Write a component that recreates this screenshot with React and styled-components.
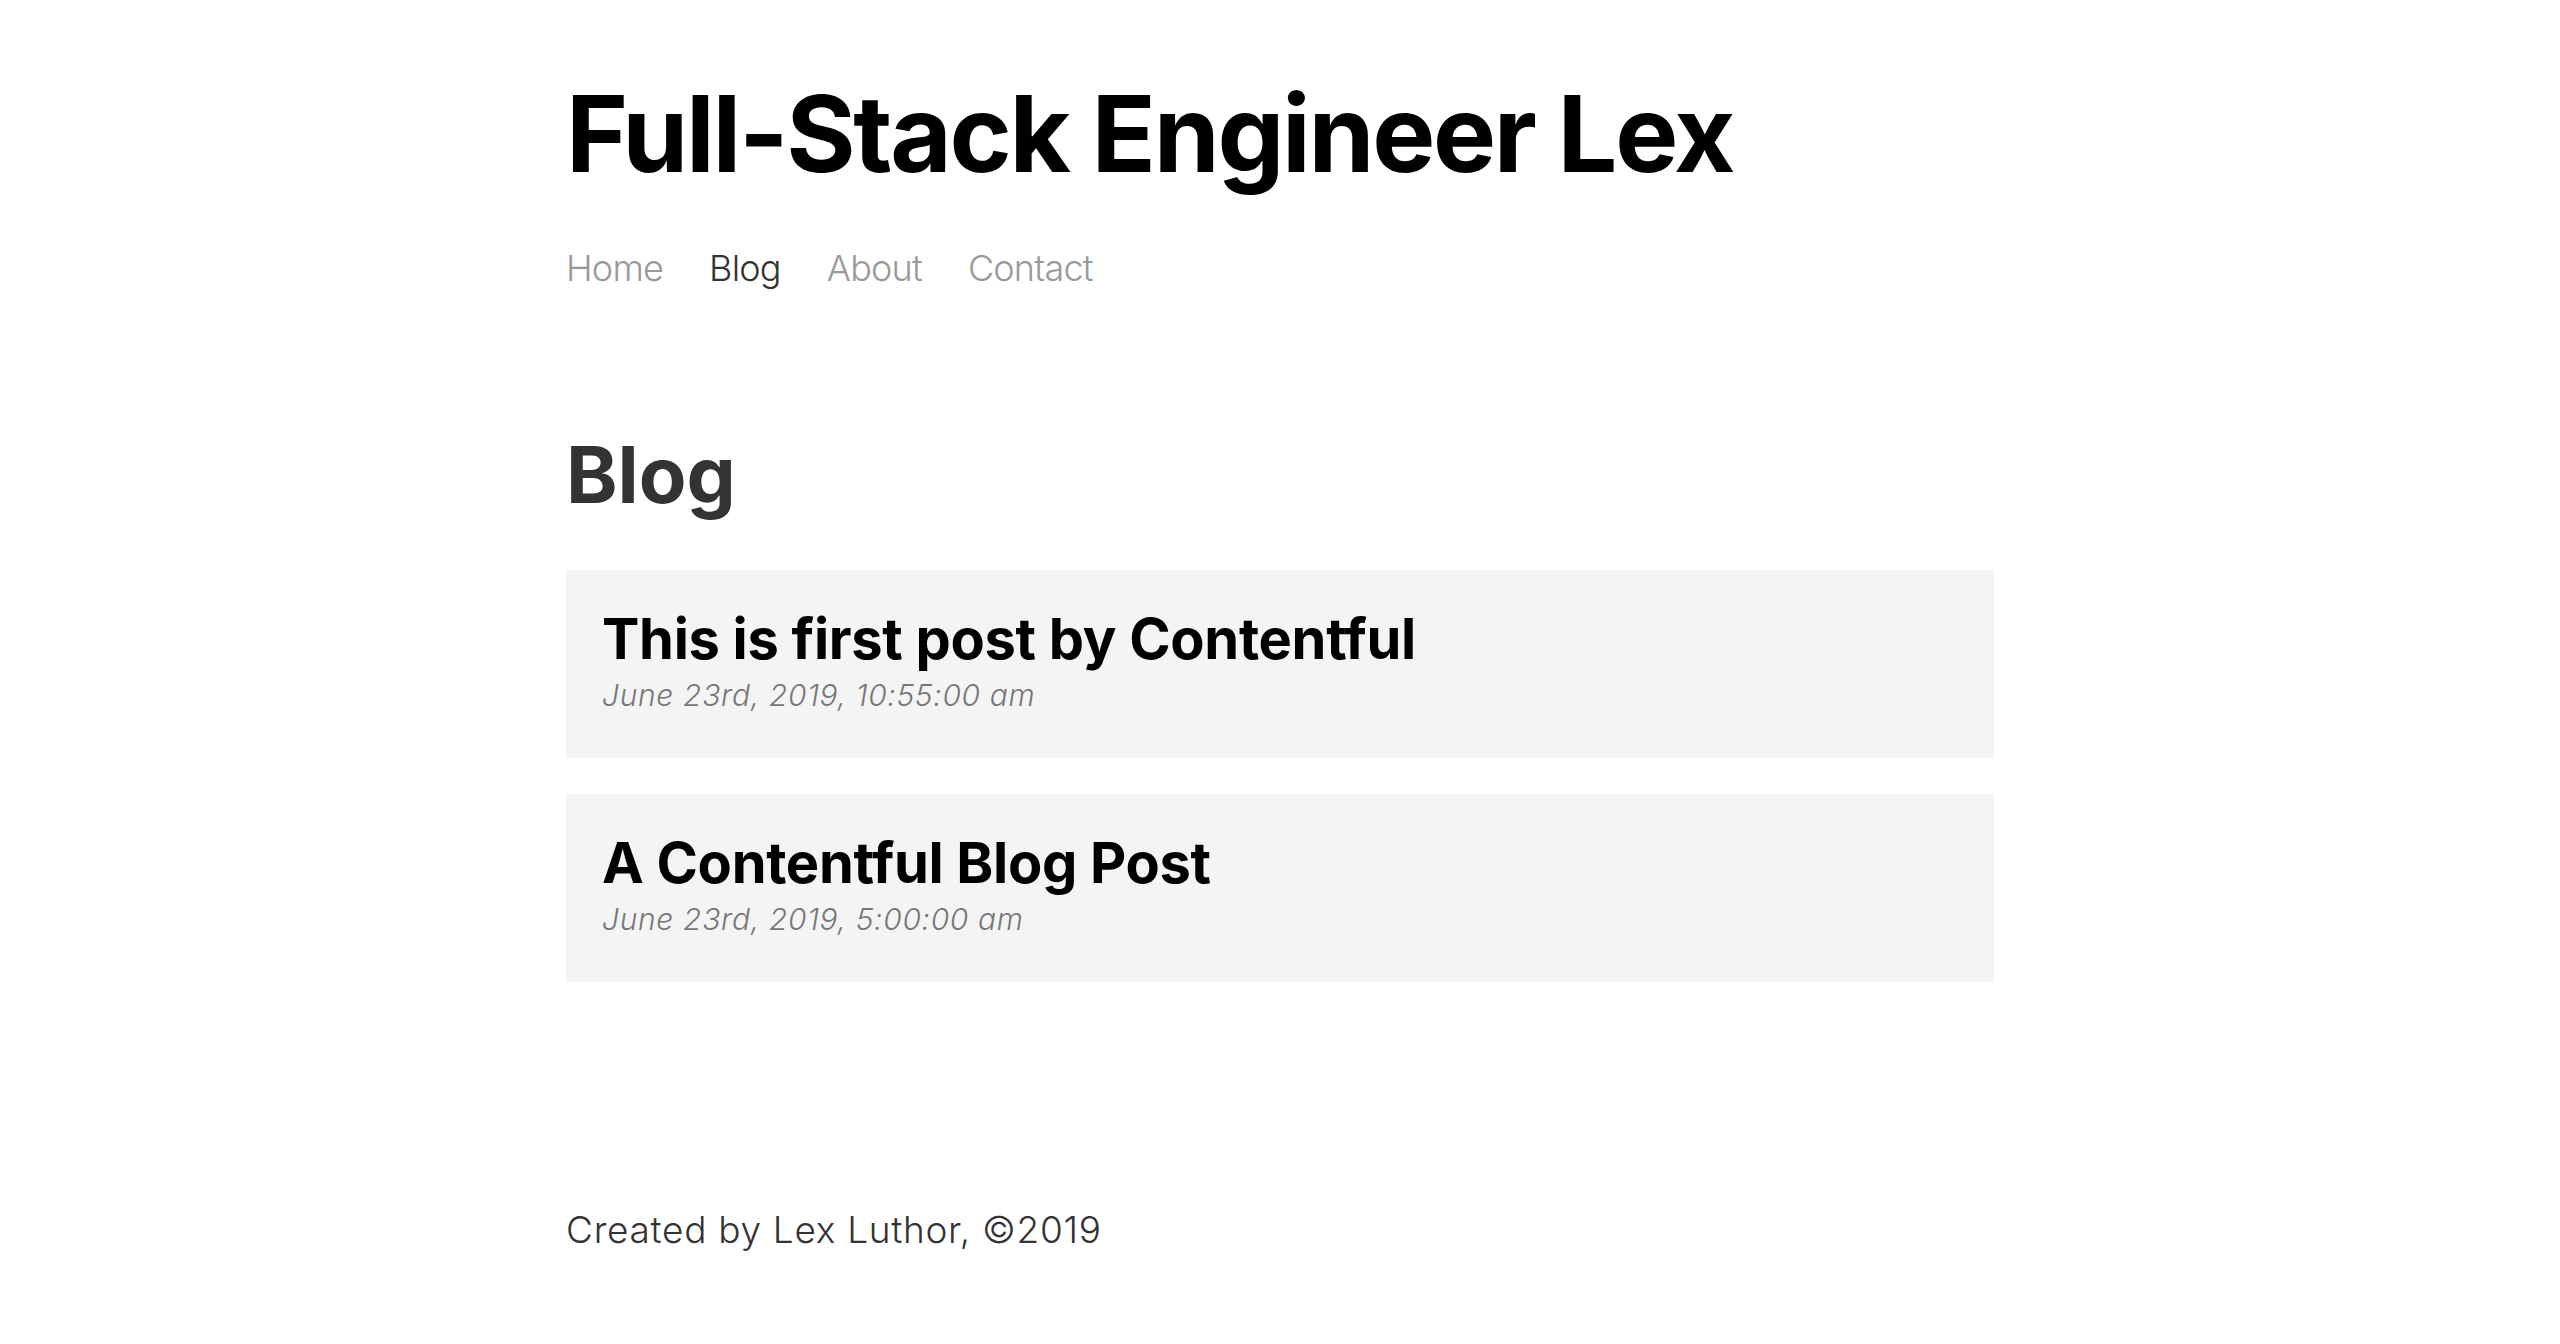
import styled, { createGlobalStyle } from "styled-components";

const GlobalStyle = createGlobalStyle`
  html, body {
    margin: 0;
    padding: 0;
    background: #fff;
  }
  body {
    font-family: Inter, "Noto Sans", "Liberation Sans", sans-serif;
    color: #333;
  }
`;

const posts = [
  { title: "This is first post by Contentful", date: "June 23rd, 2019, 10:55:00 am" },
  { title: "A Contentful Blog Post", date: "June 23rd, 2019, 5:00:00 am" },
];

const navItems = ["Home", "Blog", "About", "Contact"];

export default function App() {
  return (
    <>
      <GlobalStyle />
      <Container>
        <Header>
          <Title href="#">Full-Stack Engineer Lex</Title>
          <NavList>
            {navItems.map((item) => (
              <li key={item}>
                <NavItem href="#" $active={item === "Blog"}>
                  {item}
                </NavItem>
              </li>
            ))}
          </NavList>
        </Header>
        <Content>
          <PageHeading>Blog</PageHeading>
          <Posts>
            {posts.map((post) => (
              <Post key={post.title}>
                <PostLink href="#">
                  <PostTitle>{post.title}</PostTitle>
                  <PostDate>{post.date}</PostDate>
                </PostLink>
              </Post>
            ))}
          </Posts>
        </Content>
        <Footer>Created by Lex Luthor, ©2019</Footer>
      </Container>
    </>
  );
}

const Container = styled.div`
  max-width: 1428px;
  margin: 0 auto;
  display: flex;
  flex-direction: column;
`;

const Header = styled.header`
  padding-top: 70px;
  display: flex;
  flex-direction: column;
  align-items: flex-start;
`;

const Title = styled.a`
  color: #000;
  font-size: 106px;
  font-weight: 700;
  line-height: 1.2;
  letter-spacing: -2.3px;
  text-decoration: none;
`;

const NavList = styled.ul`
  display: flex;
  list-style-type: none;
  margin: 43px 0 0;
  padding: 0;
`;

const NavItem = styled.a`
  display: block;
  color: ${(p) => (p.$active ? "#333" : "#999")};
  font-size: 36px;
  font-weight: 300;
  line-height: 56px;
  letter-spacing: -0.8px;
  margin-right: 46px;
  text-decoration: none;
  &:hover {
    color: #666;
  }
`;

const Content = styled.main`
  flex-grow: 1;
`;

const PageHeading = styled.h1`
  margin: 132px 0 0;
  color: #333;
  font-size: 78px;
  font-weight: 700;
  line-height: 1.2;
`;

const Posts = styled.ol`
  list-style-type: none;
  margin: 48px 0 0;
  padding: 0;
  display: flex;
  flex-direction: column;
  gap: 36px;
`;

const Post = styled.li`
  margin: 0;
`;

const PostLink = styled.a`
  display: block;
  background: #f4f4f4;
  color: #000;
  padding: 36px;
  text-decoration: none;
  &:hover {
    background: #e4e4e4;
  }
`;

const PostTitle = styled.h2`
  margin: 0;
  font-size: 56px;
  font-weight: 700;
  line-height: 1.2;
  letter-spacing: -0.3px;
`;

const PostDate = styled.p`
  margin: 0 0 4px;
  color: #777;
  font-size: 30px;
  font-weight: 300;
  font-style: italic;
  line-height: 1.5;
  letter-spacing: 0.65px;
`;

const Footer = styled.footer`
  margin-top: 220px;
  color: #333;
  font-size: 37px;
  font-weight: 300;
  line-height: 1.5;
  letter-spacing: 0.7px;
`;
